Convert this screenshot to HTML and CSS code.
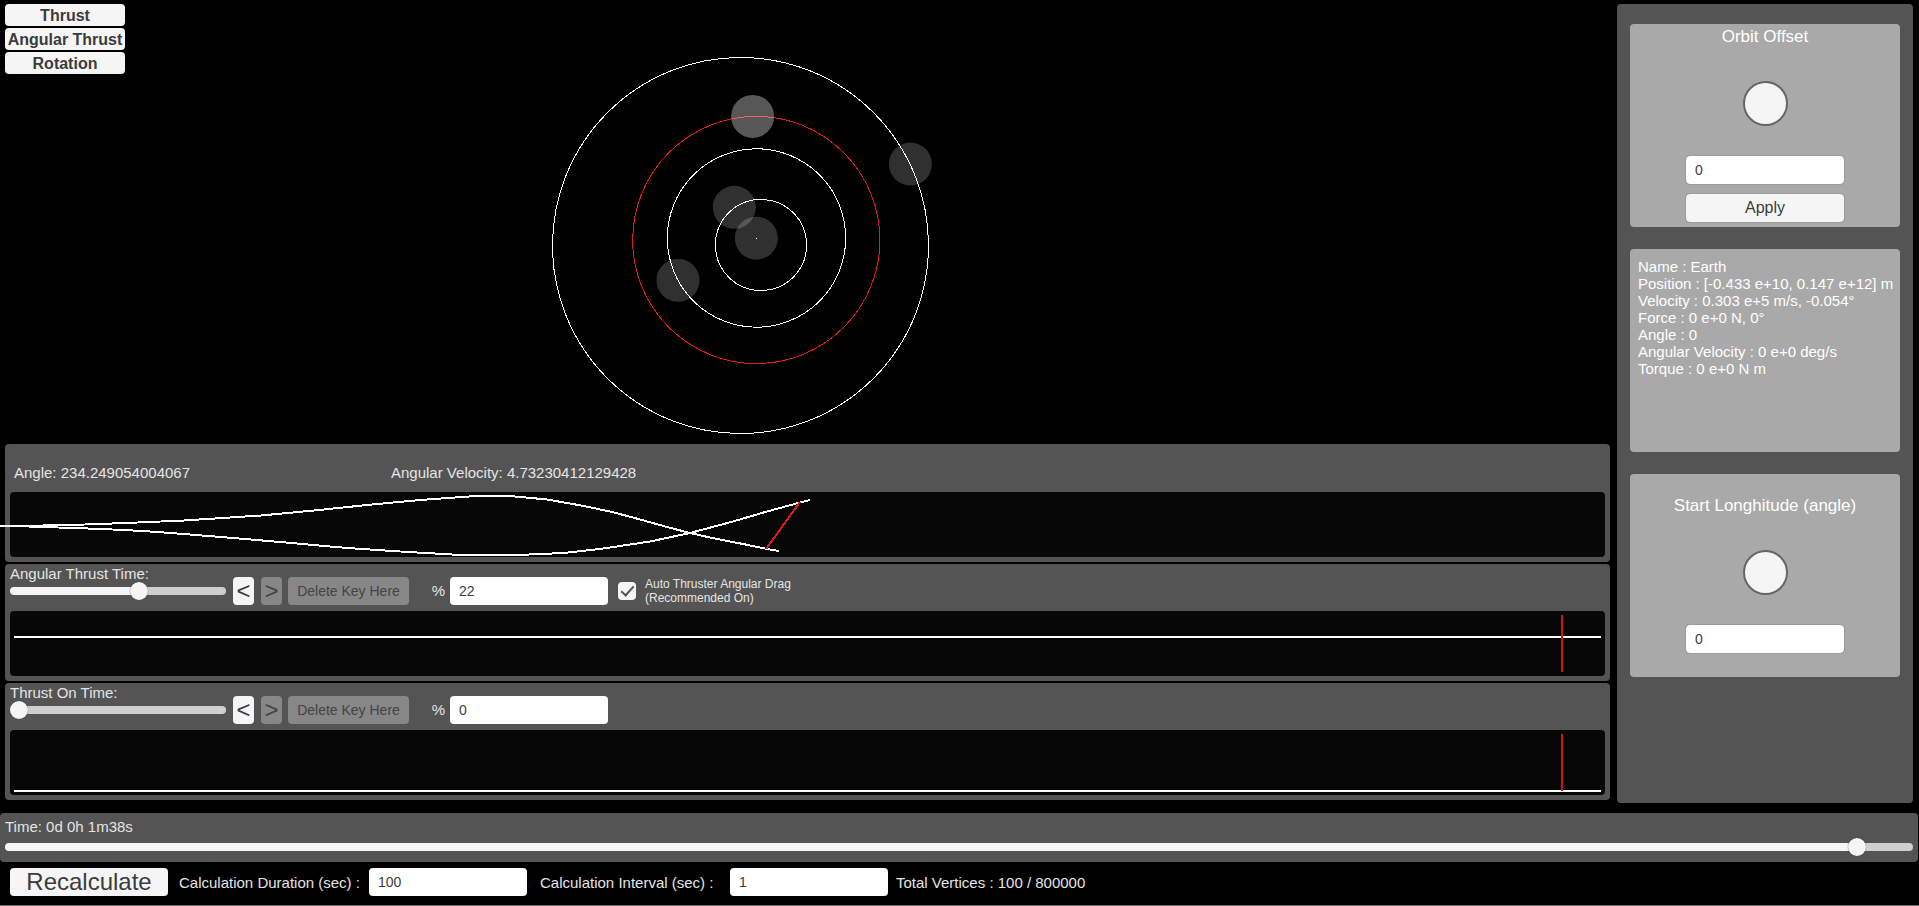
FILE: index.html
```html
<!DOCTYPE html>
<html lang="en">
<head>
<meta charset="utf-8">
<meta name="viewport" content="width=device-width, initial-scale=1">
<title>Orbit Planner</title>
<link rel="stylesheet" href="styles.css">
</head>
<body>
<div class="workspace">
  <main class="main">
    <section class="viewport">
      <svg class="orbits" viewBox="5 4 1605 440" aria-label="Orbit view">
        <g class="orbit-lines">
          <circle cx="740.5" cy="245.5" r="188"/>
          <circle class="selected" cx="756.3" cy="240" r="123.6"/>
          <circle cx="756.5" cy="238" r="89.2"/>
          <circle cx="761" cy="245" r="45.6"/>
        </g>
        <g class="bodies">
          <circle class="body-selected" cx="752.6" cy="116.4" r="21.5"/>
          <circle cx="910.4" cy="164" r="21.5"/>
          <circle cx="734.3" cy="207.3" r="21.5"/>
          <circle cx="756.3" cy="238.2" r="21.5"/>
          <circle cx="678" cy="280.3" r="21.5"/>
        </g>
        <rect class="sun" x="756" y="238" width="1" height="1"/>
      </svg>
      <nav class="modes">
        <button class="mode" type="button">Thrust</button>
        <button class="mode" type="button">Angular Thrust</button>
        <button class="mode" type="button">Rotation</button>
      </nav>
    </section>

    <div class="tracks">
      <section class="panel track">
        <div class="readouts">
          <span class="readout">Angle: 234.249054004067</span>
          <span class="readout">Angular Velocity: 4.73230412129428</span>
        </div>
        <div class="chart">
          <svg class="plot" aria-label="Rotation graph">
            <g transform="translate(-10 -491)">
              <polyline class="curve" points="0,525 43,524.5 85,523.5 126,522 184,519.5 261,514.5 314,509.5 367,504 420,499 469,495.5 490,495 510,495 547,498.5 584,505 612,511 633,516.5 667,526 690,532 710,536.5 743,543 767,548 779,550"/>
              <polyline class="curve" points="0,525 29,525.5 73,527 102,528 143,530 184,533 233,537 286,541.5 347,547 408,551 461,554 518,554 563,552 600,548 650,540.5 690,532 733,520.5 767,510.5 800,501.5 810,499"/>
              <line class="cursor" x1="766" y1="548" x2="800" y2="501"/>
            </g>
          </svg>
        </div>
      </section>

      <section class="panel track">
        <div class="toolbar">
          <div class="scrub">
            <label for="angular-time">Angular Thrust Time:</label>
            <input class="slider" id="angular-time" type="range" min="0" max="1000" value="606" style="--fill:60.6%">
          </div>
          <button class="step" type="button">&lt;</button>
          <button class="step" type="button" disabled>&gt;</button>
          <button class="delete" type="button" disabled>Delete Key Here</button>
          <label class="percent" for="angular-percent">%</label>
          <input class="field" id="angular-percent" type="text" value="22">
          <label class="drag"><input class="check" type="checkbox" checked><span>Auto Thruster Angular Drag<br>(Recommended On)</span></label>
        </div>
        <div class="chart">
          <svg class="plot" aria-label="Angular thrust graph">
            <rect class="level" x="4" y="25" width="99.5%" height="2"/>
            <rect class="marker" x="97.25%" y="4" width="2" height="57"/>
          </svg>
        </div>
      </section>

      <section class="panel track">
        <div class="toolbar">
          <div class="scrub">
            <label for="thrust-time">Thrust On Time:</label>
            <input class="slider" id="thrust-time" type="range" min="0" max="1000" value="0" style="--fill:0%">
          </div>
          <button class="step" type="button">&lt;</button>
          <button class="step" type="button" disabled>&gt;</button>
          <button class="delete" type="button" disabled>Delete Key Here</button>
          <label class="percent" for="thrust-percent">%</label>
          <input class="field" id="thrust-percent" type="text" value="0">
        </div>
        <div class="chart">
          <svg class="plot" aria-label="Thrust graph">
            <rect class="level" x="4" y="60" width="99.5%" height="2"/>
            <rect class="marker" x="97.25%" y="4" width="2" height="57"/>
          </svg>
        </div>
      </section>
    </div>
  </main>

  <aside class="panel sidebar">
    <section class="card offset">
      <h2 class="title"><label for="orbit-offset">Orbit Offset</label></h2>
      <button class="knob" type="button" aria-label="Orbit offset knob"></button>
      <input class="field" id="orbit-offset" type="text" value="0">
      <button class="apply" type="button">Apply</button>
    </section>
    <section class="card info">
      <div>Name : Earth</div>
      <div>Position : [-0.433 e+10, 0.147 e+12] m</div>
      <div>Velocity : 0.303 e+5 m/s, -0.054°</div>
      <div>Force : 0 e+0 N, 0°</div>
      <div>Angle : 0</div>
      <div>Angular Velocity : 0 e+0 deg/s</div>
      <div>Torque : 0 e+0 N m</div>
    </section>
    <section class="card longitude">
      <h2 class="title"><label for="start-angle">Start Longhitude (angle)</label></h2>
      <button class="knob" type="button" aria-label="Start angle knob"></button>
      <input class="field" id="start-angle" type="text" value="0">
    </section>
  </aside>
</div>

<section class="panel timeline">
  <label for="time">Time: 0d 0h 1m38s</label>
  <input class="slider" id="time" type="range" min="0" max="1000" value="975" style="--fill:97.5%">
</section>

<footer class="footer">
  <button class="recalculate" type="button">Recalculate</button>
  <label class="duration" for="duration">Calculation Duration (sec) :</label>
  <input class="field" id="duration" type="text" value="100">
  <label class="interval" for="interval">Calculation Interval (sec) :</label>
  <input class="field" id="interval" type="text" value="1">
  <span class="total">Total Vertices : 100 / 800000</span>
</footer>
</body>
</html>
```
FILE: styles.css
```css
* {
  box-sizing: border-box;
}

body {
  display: flex;
  flex-direction: column;
  min-height: 100vh;
  margin: 0;
  border-bottom: 1px solid #666;
  background: #000;
  color: #e4e4e4;
  font: 15px/17px "Liberation Sans", Arial, sans-serif;
}

button,
input {
  margin: 0;
  border: 0;
  font-family: inherit;
}

button {
  padding: 0;
  border-radius: 4px;
  background: #f5f5f5;
  color: #3c3c3c;
}

button:disabled {
  background: #878787;
  color: #444;
}

.workspace {
  display: grid;
  flex: 1;
  grid-template-columns: minmax(0, 1fr) 296px;
  column-gap: 7px;
  padding: 4px 6px 10px 5px;
}

.main {
  display: flex;
  flex-direction: column;
  padding-bottom: 3px;
}

.viewport {
  position: relative;
  flex: 1;
}

.orbits {
  display: block;
  width: 100%;
  height: 440px;
}

.orbit-lines {
  fill: none;
  stroke: #fff;
  stroke-width: 1;
  shape-rendering: crispEdges;
}

.selected {
  stroke: #dc1a1f;
}

.bodies {
  fill: rgb(255 255 255 / 19%);
}

.body-selected {
  fill: rgb(255 255 255 / 34%);
}

.sun {
  fill: #fff;
}

.modes {
  position: absolute;
  top: 0;
  left: 0;
  display: flex;
  flex-direction: column;
  gap: 2px;
  width: 120px;
}

.mode {
  height: 22px;
  padding-top: 1px;
  font-size: 16px;
  font-weight: bold;
}

.panel {
  border-radius: 4px;
  background: #545454;
}

.tracks {
  display: flex;
  flex-direction: column;
  gap: 2px;
}

.track {
  padding: 0 5px 5px;
}

.readouts {
  display: grid;
  grid-template-columns: 377px 1fr;
  align-items: center;
  padding: 20px 4px 11px;
}

.chart {
  height: 65px;
  border-radius: 4px;
  background: #070707;
}

.plot {
  display: block;
  width: 100%;
  height: 100%;
  overflow: visible;
  shape-rendering: crispEdges;
}

.curve {
  fill: none;
  stroke: #fff;
  stroke-width: 2;
}

.cursor {
  stroke: #dc1a1f;
  stroke-width: 2;
}

.level {
  fill: #fff;
}

.marker {
  fill: #c8141a;
}

.toolbar {
  display: flex;
  align-items: flex-end;
  height: 47px;
  padding-bottom: 6px;
}

.scrub {
  display: flex;
  flex-direction: column;
  width: 216px;
  margin-right: 7px;
  padding-bottom: 5px;
}

.slider {
  display: block;
  width: 100%;
  height: 18px;
  appearance: none;
  background: none;
}

.slider::-webkit-slider-runnable-track {
  height: 8px;
  border-radius: 4px;
  background: linear-gradient(to right, #f5f5f5 var(--fill), #cfcfcf var(--fill));
}

.slider::-webkit-slider-thumb {
  width: 18px;
  height: 18px;
  margin-top: -5px;
  border-radius: 50%;
  appearance: none;
  background: #f5f5f5;
  box-shadow: 0 0 1px #333;
}

.step {
  width: 21px;
  height: 28px;
  margin-right: 7px;
  font-size: 24px;
  line-height: 28px;
}

.step + .delete,
.step:disabled {
  margin-right: 6px;
}

.delete {
  width: 121px;
  height: 28px;
  font-size: 14px;
}

.step + .delete {
  margin-right: 0;
}

.percent {
  width: 41px;
  padding-right: 5px;
  line-height: 28px;
  text-align: right;
}

.field {
  width: 158px;
  height: 28px;
  padding: 0 9px;
  border-radius: 4px;
  background: #fff;
  color: #3c3c3c;
  font-size: 14px;
}

.drag {
  display: flex;
  gap: 9px;
  align-items: center;
  margin-left: 10px;
  font-size: 12px;
  line-height: 14px;
}

.check {
  display: grid;
  place-items: center;
  width: 18px;
  height: 18px;
  border-radius: 4px;
  appearance: none;
  background: #f5f5f5;
}

.check:checked::before {
  width: 11px;
  height: 5px;
  border: solid #555;
  border-width: 0 0 2px 2px;
  content: "";
  transform: translateY(-2px) rotate(-48deg);
}

.sidebar {
  display: flex;
  flex-direction: column;
  gap: 22px;
  padding: 20px 13px;
}

.card {
  min-height: 203px;
  border-radius: 4px;
  background: #a9a9a9;
  color: #fff;
}

.offset,
.longitude {
  display: flex;
  flex-direction: column;
  align-items: center;
}

.offset {
  padding-top: 3px;
}

.longitude {
  padding-top: 22px;
}

.title {
  margin: 0 0 34px;
  font-size: 17px;
  font-weight: normal;
  line-height: 20px;
}

.knob {
  width: 45px;
  height: 45px;
  border: 2px solid #666;
  border-radius: 50%;
}

.card .field {
  margin-top: 30px;
}

.apply {
  width: 158px;
  height: 28px;
  margin-top: 10px;
  font-size: 16px;
}

.card .field,
.apply {
  box-shadow: 0 0 1px #333;
}

.info {
  padding: 9px 0 9px 8px;
}

.timeline {
  margin-right: 1px;
  padding: 5px 5px 6px;
}

.timeline .slider {
  margin-top: 3px;
}

.footer {
  display: flex;
  align-items: center;
  padding: 6px 10px 9px;
}

.recalculate {
  width: 158px;
  height: 28px;
  font-size: 24px;
  line-height: 28px;
}

.duration {
  width: 201px;
  padding-left: 11px;
}

.interval {
  width: 203px;
  padding-left: 13px;
}

.total {
  padding-left: 8px;
}
```
